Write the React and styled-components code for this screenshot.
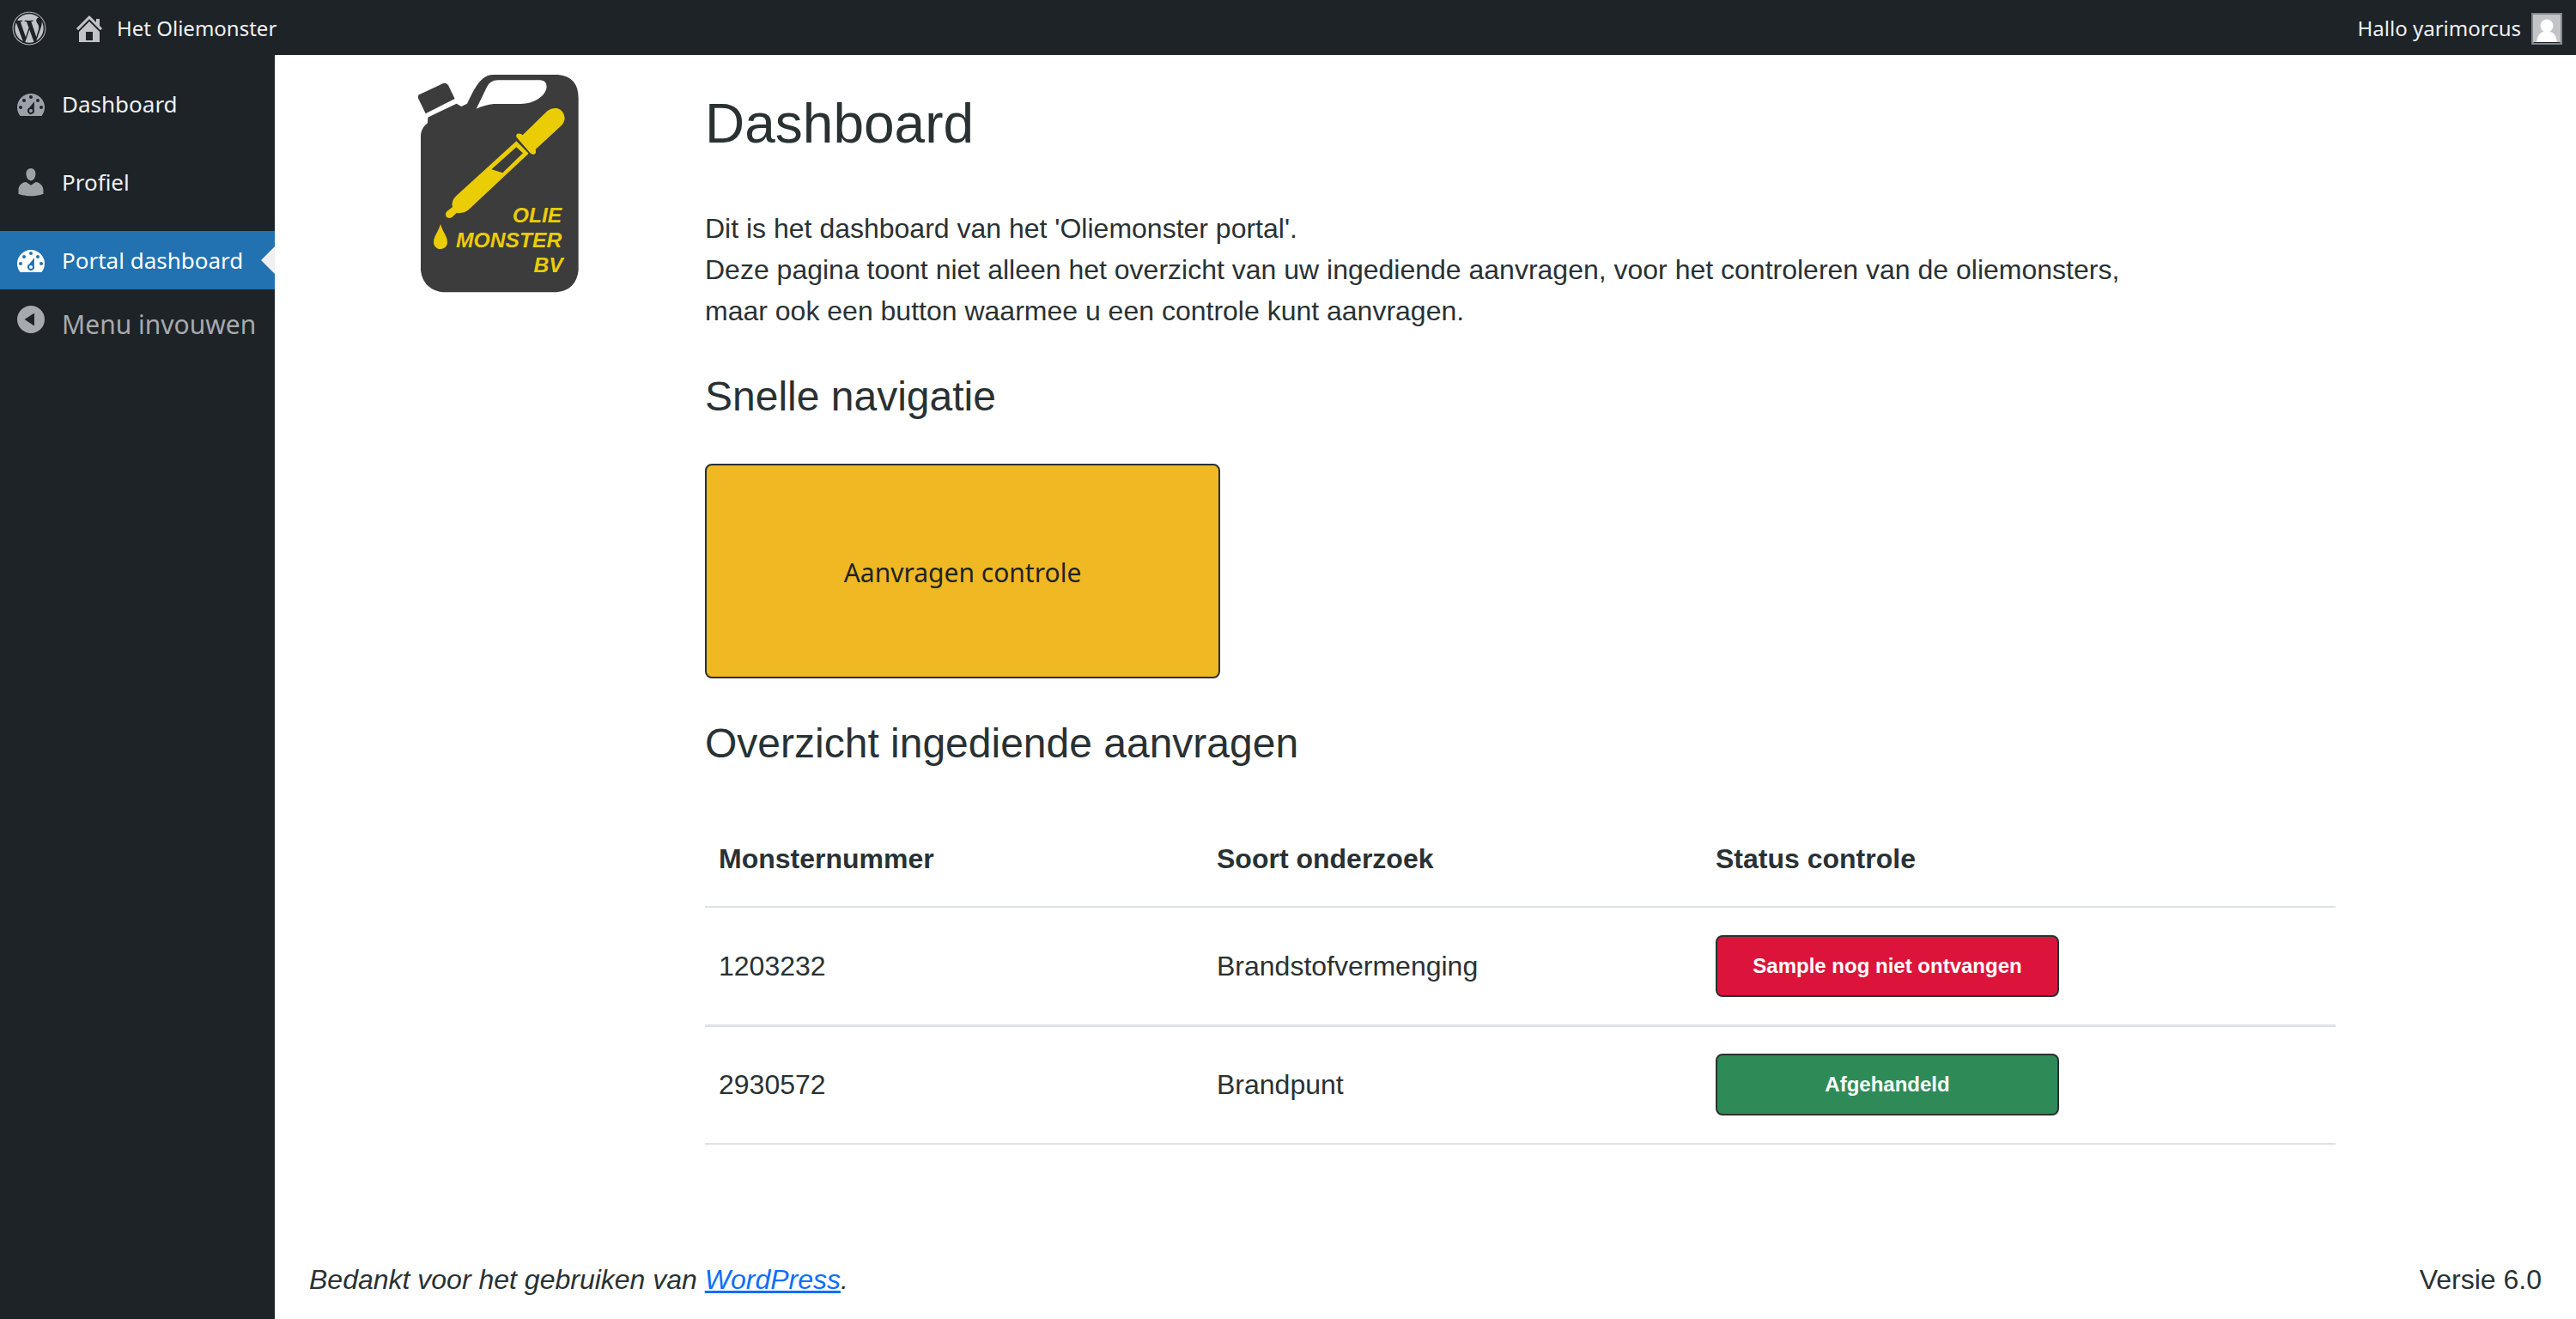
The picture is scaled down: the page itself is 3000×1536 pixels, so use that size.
import React from "react";
import styled, { createGlobalStyle } from "styled-components";
import { FaWordpress } from "react-icons/fa";

const GlobalStyle = createGlobalStyle`
  *, *::before, *::after { box-sizing: border-box; }
  body {
    margin: 0;
    background: #fff;
    color: #293133;
    font: 32px/48px "Liberation Sans", Arial, sans-serif;
  }
  h1, h2, p { margin: 0; font-weight: 400; }
`;

const uiFont = `"Noto Sans", "Segoe UI", sans-serif`;

const Page = styled.div`
  display: flex;
  flex-direction: column;
  min-height: 100vh;
`;

const AdminBar = styled.header`
  display: flex;
  justify-content: space-between;
  align-items: center;
  height: 64px;
  padding: 2px 16px 0 14px;
  background: #1d2327;
`;

const BarGroup = styled.div`
  display: flex;
  align-items: center;
  gap: 30px;
`;

const BarLink = styled.a`
  display: flex;
  align-items: center;
  gap: ${(p) => p.$gap || 0}px;
  color: #f0f0f1;
  font: 24px/60px ${uiFont};
  text-decoration: none;
  svg { display: block; color: #c3c4c7; }
`;

const Body = styled.div`
  display: flex;
  flex: 1;
`;

const Sidebar = styled.nav`
  display: flex;
  flex-direction: column;
  flex: none;
  width: 320px;
  padding-top: 23px;
  background: #1d2327;
`;

const MenuList = styled.ul`
  display: flex;
  flex-direction: column;
  gap: 23px;
  margin: 0;
  padding: 0;
  list-style: none;
`;

const MenuLink = styled.a`
  position: relative;
  display: flex;
  align-items: center;
  gap: 16px;
  height: 68px;
  padding-left: 16px;
  background: ${(p) => (p.$active ? "#2271b1" : "transparent")};
  color: ${(p) => (p.$active ? "#fff" : "#f0f0f1")};
  font: 26px/36px ${uiFont};
  text-decoration: none;
  white-space: nowrap;
  svg { flex: none; color: ${(p) => (p.$active ? "#fff" : "#9ca2a7")}; }
  &::after {
    content: ${(p) => (p.$active ? '""' : "none")};
    position: absolute;
    right: 0;
    top: 50%;
    margin-top: -16px;
    border: 16px solid transparent;
    border-left-width: 0;
    border-right-color: #f0f0f1;
  }
`;

const CollapseButton = styled.button`
  display: flex;
  align-items: flex-start;
  gap: 16px;
  padding: 15px 0 0 16px;
  border: 0;
  background: none;
  color: #a7aaad;
  font: 30px/52px ${uiFont};
  white-space: nowrap;
  svg { flex: none; }
`;

const Content = styled.div`
  display: flex;
  flex-direction: column;
  flex: 1;
  min-width: 0;
`;

const Main = styled.main`
  display: grid;
  grid-template-columns: 440px minmax(0, 1fr);
  column-gap: 21px;
  flex: 1;
  padding: 6px 280px 0 40px;
`;

const Logo = styled.svg`
  justify-self: center;
  width: 240px;
  height: 290px;
`;

const Article = styled.div`
  display: flex;
  flex-direction: column;
  align-items: flex-start;
`;

const Title = styled.h1`
  padding: 34px 0 58px;
  font-size: 64px;
  line-height: 80px;
`;

const Section = styled.h2`
  padding: 46px 0 48px;
  font-size: 48px;
  line-height: 60px;
`;

const RequestButton = styled.button`
  width: 600px;
  max-width: 100%;
  height: 250px;
  padding-top: 4px;
  border: 2px solid #293133;
  border-radius: 8px;
  background: #f0b823;
  color: #1d2327;
  font: 30px/48px ${uiFont};
`;

const Table = styled.table`
  width: 100%;
  border-collapse: collapse;
  table-layout: fixed;
  text-align: left;
`;

const Cell = styled.td`
  height: ${(p) => p.$height || 138}px;
  padding: 0 16px;
  border-bottom: ${(p) => p.$line || 2}px solid #dee2e6;
  vertical-align: middle;
`;

const HeadCell = styled(Cell)`
  width: ${(p) => p.$width || "auto"};
  font-weight: 700;
`;

const Badge = styled.span`
  display: flex;
  align-items: center;
  justify-content: center;
  width: 400px;
  height: 72px;
  border: 2px solid #293133;
  border-radius: 8px;
  background: ${(p) => (p.$done ? "#2e8b57" : "#dc143c")};
  color: #fff;
  font-size: 24px;
  font-weight: 700;
`;

const Footer = styled.footer`
  display: flex;
  justify-content: space-between;
  padding: 20px 40px 22px;
  a { color: #0d6efd; }
`;

const GaugeIcon = () => (
  <svg width="40" height="40" viewBox="0 0 20 20" fill="currentColor" aria-hidden="true">
    <path fillRule="evenodd" d="M3.76 17C2.68 15.68 2 13.93 2 12a8 8 0 0 1 16 0c0 1.93-.68 3.68-1.76 5zM9 6a1 1 0 1 0 2 0 1 1 0 0 0-2 0zM5 8a1 1 0 1 0 2 0 1 1 0 0 0-2 0zM13 8a1 1 0 1 0 2 0 1 1 0 0 0-2 0zM3 12a1 1 0 1 0 2 0 1 1 0 0 0-2 0zM15 12a1 1 0 1 0 2 0 1 1 0 0 0-2 0zM12 8.6 9 12.3a2 2 0 1 0 2.9 1.1z" />
    <circle cx="10" cy="14" r="1" />
  </svg>
);

const UserIcon = () => (
  <svg width="40" height="40" viewBox="0 0 20 20" fill="currentColor" aria-hidden="true">
    <path d="M10 9.25c-2.27 0-2.73-3.44-2.73-3.44C7 4.02 7.82 2 9.97 2c2.16 0 2.98 2.02 2.71 3.81 0 0-.41 3.44-2.68 3.44zm0 2.57L12.72 10c2.39 0 4.52 2.33 4.52 4.53v2.49s-3.65 1.13-7.24 1.13c-3.65 0-7.24-1.13-7.24-1.13v-2.49c0-2.25 1.94-4.48 4.47-4.48z" />
  </svg>
);

const HomeIcon = () => (
  <svg width="40" height="40" viewBox="0 0 20 20" fill="currentColor" aria-hidden="true">
    <path d="M16 8.5l1.53 1.53-1.06 1.06L10 4.6l-6.47 6.49-1.06-1.06L10 2.5l4 4v-2h2v4zm-6-2.46l6 5.99V18H4v-5.97zM12 17v-5H8v5h4z" />
  </svg>
);

const CollapseIcon = () => (
  <svg width="40" height="40" viewBox="0 0 20 20" fill="currentColor" aria-hidden="true">
    <path fillRule="evenodd" d="M10 2a8 8 0 1 0 0 16 8 8 0 0 0 0-16zm2 4.2v7.6L6.3 10z" />
  </svg>
);

const Avatar = () => (
  <svg width="36" height="37" viewBox="0 0 36 37" role="img" aria-label="Avatar">
    <path fill="#82878c" d="M0 0h36v37H0z" />
    <path fill="#c3c4c7" d="M2 2h32v32H2z" />
    <circle cx="18" cy="15" r="7.5" fill="#fff" />
    <path fill="#fff" d="M6 34c1-8 5-13 12-13s11 5 12 13z" />
    <path fill="#1d2327" d="M3 34h30v1H3z" />
  </svg>
);

const OilLogo = () => (
  <Logo viewBox="0 0 720 870" role="img" aria-label="Olie Monster BV">
    <g fill="#3c3c3c">
      <path d="M84 121 167 82q12-5 19 6l23 47-102 52-25-52q-4-10 2-14z" />
      <path fillRule="evenodd" d="M115 200 215 152l17 10 20-10C272 112 285 82 308 64Q323 51 345 51H570Q641 58 641 133V735Q633 803 565 811H170Q99 803 90 735V262Q92 236 114 220zM284 170 320 96Q331 70 360 70H508Q530 72 530 94C526 127 485 153 440 153H345Q315 156 284 170z" />
    </g>
    <g fill="#ebcd06">
      <path d="M446 262 532 178Q547 166 566 168 590 175 593 202 592 218 582 228L491 312q4 15-5 17-8 2-14-5L425 270q-4-9 3-13 10-3 18 5z" />
      <path fillRule="evenodd" d="M424 283 467 326 257 523Q240 537 215 534L199 549q-12 7-20-2-5-10 2-18L201 513q-6-22 14-40zM424 304 337 382 376 394 447 325z" />
      <path d="M159 573c8 28 24 42 24 63 0 32-48 32-48 0 0-21 16-35 24-63z" />
      <g fontFamily="Liberation Sans, Arial, sans-serif" fontSize="74" fontWeight="700" fontStyle="italic" textAnchor="end">
        <text x="583" y="566">OLIE</text>
        <text x="583" y="654">MONSTER</text>
        <text x="587" y="741">BV</text>
      </g>
    </g>
  </Logo>
);

const requests = [
  { id: "1203232", kind: "Brandstofvermenging", status: "Sample nog niet ontvangen", done: false, line: 3 },
  { id: "2930572", kind: "Brandpunt", status: "Afgehandeld", done: true, line: 2 },
];

export default function App() {
  return (
    <Page>
      <GlobalStyle />
      <AdminBar>
        <BarGroup>
          <BarLink href="#wp" aria-label="WordPress"><FaWordpress size={40} /></BarLink>
          <BarLink href="#site" $gap={12}><HomeIcon />Het Oliemonster</BarLink>
        </BarGroup>
        <BarLink href="#account" $gap={12}>Hallo yarimorcus<Avatar /></BarLink>
      </AdminBar>
      <Body>
        <Sidebar>
          <MenuList>
            <li><MenuLink href="#dashboard"><GaugeIcon />Dashboard</MenuLink></li>
            <li><MenuLink href="#profiel"><UserIcon />Profiel</MenuLink></li>
            <li><MenuLink href="#portal" $active aria-current="page"><GaugeIcon />Portal dashboard</MenuLink></li>
          </MenuList>
          <CollapseButton type="button"><CollapseIcon />Menu invouwen</CollapseButton>
        </Sidebar>
        <Content>
          <Main>
            <OilLogo />
            <Article>
              <Title>Dashboard</Title>
              <p>
                Dit is het dashboard van het 'Oliemonster portal'.<br />
                Deze pagina toont niet alleen het overzicht van uw ingediende aanvragen, voor het controleren van de oliemonsters,<br />
                maar ook een button waarmee u een controle kunt aanvragen.
              </p>
              <Section>Snelle navigatie</Section>
              <RequestButton type="button">Aanvragen controle</RequestButton>
              <Section>Overzicht ingediende aanvragen</Section>
              <Table>
                <thead>
                  <tr>
                    <HeadCell as="th" scope="col" $height={112} $width="580px">Monsternummer</HeadCell>
                    <HeadCell as="th" scope="col" $height={112} $width="581px">Soort onderzoek</HeadCell>
                    <HeadCell as="th" scope="col" $height={112}>Status controle</HeadCell>
                  </tr>
                </thead>
                <tbody>
                  {requests.map((r) => (
                    <tr key={r.id}>
                      <Cell $line={r.line}>{r.id}</Cell>
                      <Cell $line={r.line}>{r.kind}</Cell>
                      <Cell $line={r.line}><Badge $done={r.done}>{r.status}</Badge></Cell>
                    </tr>
                  ))}
                </tbody>
              </Table>
            </Article>
          </Main>
          <Footer>
            <em>Bedankt voor het gebruiken van <a href="#wordpress">WordPress</a>.</em>
            <span>Versie 6.0</span>
          </Footer>
        </Content>
      </Body>
    </Page>
  );
}
